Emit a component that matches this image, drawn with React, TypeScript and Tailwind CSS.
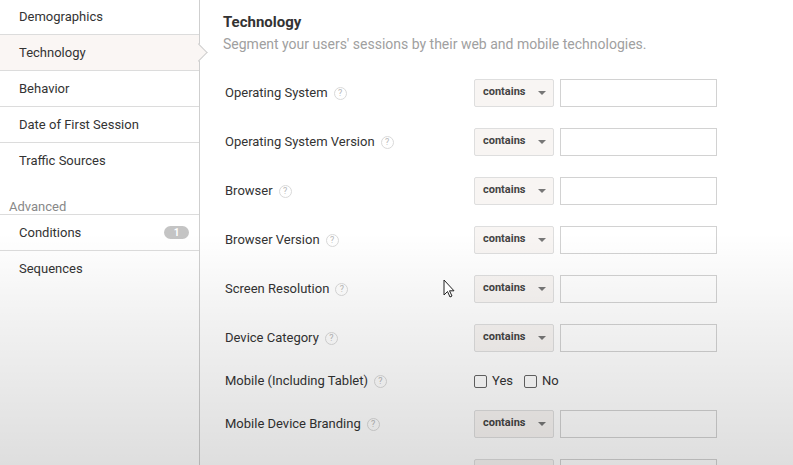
import React from 'react';

const sideItems = ['Demographics', 'Technology', 'Behavior', 'Date of First Session', 'Traffic Sources'];

type Row = { label: string; kind: 'match' | 'check' | 'partial' };

const rows: Row[] = [
  { label: 'Operating System', kind: 'match' },
  { label: 'Operating System Version', kind: 'match' },
  { label: 'Browser', kind: 'match' },
  { label: 'Browser Version', kind: 'match' },
  { label: 'Screen Resolution', kind: 'match' },
  { label: 'Device Category', kind: 'match' },
  { label: 'Mobile (Including Tablet)', kind: 'check' },
  { label: 'Mobile Device Branding', kind: 'match' },
  { label: '', kind: 'partial' },
];

const Help = () => (
  <span className="ml-[6px] inline-flex h-[13px] w-[13px] items-center justify-center rounded-full border border-[#d9d9d9] text-[9px] leading-none text-[#b8b8b8]">
    ?
  </span>
);

const MatchSelect = ({ empty }: { empty?: boolean }) => (
  <div className="flex h-[28px] w-[80px] items-center justify-between rounded-[2px] border border-[#dedede] bg-[#f8f5f3] pl-[8px] pr-[7px]">
    <span className="text-[11px] font-bold text-[#444]">{empty ? '' : 'contains'}</span>
    {!empty && (
      <svg width="8" height="4" viewBox="0 0 8 4">
        <path d="M0 0h8L4 4z" fill="#777" />
      </svg>
    )}
  </div>
);

const SideRow = ({ label, active, last }: { label: string; active?: boolean; last?: boolean }) => (
  <div
    className={`relative flex h-[36px] items-center px-[19px] ${last ? '' : 'border-b border-[#dcdcdc]'} ${active ? 'bg-[#faf6f4]' : ''}`}
  >
    <span>{label}</span>
    {active && (
      <span className="absolute right-[-6px] top-[11px] z-10 h-[13px] w-[13px] rotate-45 border-r border-t border-[#cfcfcf] bg-[#faf6f4]" />
    )}
  </div>
);

export default function App() {
  return (
    <div className="relative flex h-[465px] w-[793px] overflow-hidden bg-white font-['Roboto',sans-serif] text-[13px] text-[#333]">
      {/* left nav */}
      <div className="w-[200px] shrink-0 border-r border-[#cfcfcf]">
        <div className="-mt-[1px]">
          {sideItems.map((s, i) => (
            <SideRow key={s} label={s} active={s === 'Technology'} last={i === sideItems.length - 1} />
          ))}
        </div>
        <div className="flex h-[36px] items-end border-b border-[#dcdcdc] px-[9px] leading-[15px] text-[#888]">
          Advanced
        </div>
        <div className="flex h-[36px] items-center justify-between border-b border-[#dcdcdc] pl-[19px] pr-[10px]">
          <span>Conditions</span>
          <span className="flex h-[13px] w-[25px] items-center justify-center rounded-full bg-[#c4c4c4] text-[10px] font-bold text-white">
            1
          </span>
        </div>
        <SideRow label="Sequences" last />
      </div>

      {/* main */}
      <div className="flex-1 pl-[23px]">
        <div className="pt-[12px] text-[15px] font-bold leading-[20px] text-[#333]">Technology</div>
        <div className="mt-[2px] text-[14px] leading-[20px] text-[#a0a0a0]">
          Segment your users' sessions by their web and mobile technologies.
        </div>
        <div className="mt-[14px]">
          {rows.map((r, i) => (
            <div key={i} className={`flex items-center ${r.kind === 'check' ? 'h-[37px]' : 'h-[49px]'}`}>
              <div className="flex w-[251px] items-center pl-[2px] pt-[1px]">
                {r.label && (
                  <>
                    <span>{r.label}</span>
                    <Help />
                  </>
                )}
              </div>
              {r.kind === 'check' ? (
                <div className="flex items-center pt-[1px]">
                  <span className="h-[13px] w-[13px] rounded-[2px] border border-[#666] bg-white" />
                  <span className="ml-[5px]">Yes</span>
                  <span className="ml-[11px] h-[13px] w-[13px] rounded-[2px] border border-[#666] bg-white" />
                  <span className="ml-[5px]">No</span>
                </div>
              ) : (
                <div className="flex gap-[6px]">
                  <MatchSelect empty={r.kind === 'partial'} />
                  <div className="h-[28px] w-[157px] border border-[#d2d2d2] bg-white" />
                </div>
              )}
            </div>
          ))}
        </div>
      </div>

      {/* fade overlay */}
      <div className="pointer-events-none absolute inset-0 bg-[linear-gradient(to_bottom,rgba(0,0,0,0)_0%,rgba(0,0,0,0)_50%,rgba(0,0,0,0.05)_68%,rgba(0,0,0,0.13)_100%)]" />

      {/* mouse cursor */}
      <svg className="pointer-events-none absolute left-[443px] top-[279px]" width="12" height="19" viewBox="0 0 12 19">
        <path d="M1 1v15l3.5-3.5 2.5 5.5 2-1-2.5-5.2H11z" fill="#fff" stroke="#222" strokeWidth="1" strokeLinejoin="round" />
      </svg>
    </div>
  );
}
